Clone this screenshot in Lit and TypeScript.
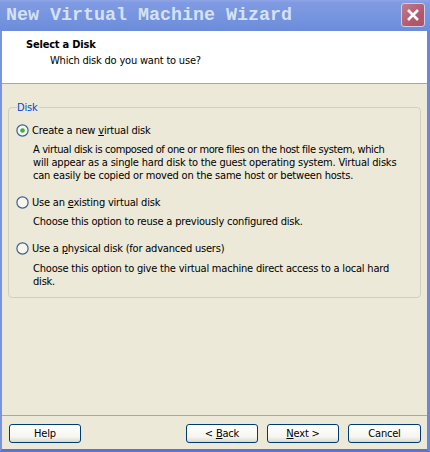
import { LitElement, html, css, svg } from "lit";
import { customElement } from "lit/decorators.js";

@customElement("app-root")
export class AppRoot extends LitElement {
  static styles = css`
    :host { display: block; width: 430px; height: 452px; overflow: hidden; font-family: "DejaVu Sans", Tahoma, sans-serif; font-stretch: condensed; font-size: 11px; letter-spacing: -0.2px; color: #000; }
    * { box-sizing: border-box; }
    .win { width: 430px; height: 452px; display: flex; flex-direction: column; background: #ece9d8; border-left: 2px solid #7a93df; border-right: 3px solid #6d86d8; border-bottom: 3px solid #5a74cf; }
    .titlebar { margin: 0 -3px 0 -2px; height: 31px; flex: none; display: flex; align-items: center; justify-content: space-between; padding: 0 5px 1px 6px; background: linear-gradient(180deg, #8ea4e6 0px, #7f9ae2 3px, #7896e0 14px, #6c8cdb 31px); }
    .title { font-family: "Liberation Mono", monospace; font-weight: 700; font-stretch: normal; letter-spacing: 0; font-size: 18.33px; color: #d5e2f6; white-space: pre; }
    .close { width: 24px; height: 24px; border: 1px solid #c9d0ea; border-radius: 3px; background: linear-gradient(135deg, #bf7c8c, #b2546a 70%); display: flex; align-items: center; justify-content: center; }
    .header { height: 53px; flex: none; background: #fff; border-bottom: 1px solid #aca899; padding: 6px 0 0 24px; }
    .h1 { font-weight: 700; line-height: 16px; }
    .h2 { line-height: 16px; padding-left: 24px; }
    .body { flex: 1; padding: 17px 7px 0 6px; }
    fieldset { margin: 0; padding: 9px 8px 0 8px; height: 197px; width: 413px; border: 1px solid #d0d0bf; border-radius: 4px; }
    legend { color: #0046d5; padding: 0 2px 0 0; margin-left: 0; line-height: 13px; }
    .opt { display: flex; align-items: center; gap: 3px; height: 14px; margin-left: -1px; }
    .radio { width: 13px; height: 13px; flex: none; }
    .desc { margin: 6px 0 0 16px; line-height: 13px; white-space: nowrap; }
    .tight { letter-spacing: -0.38px; }
    .o2 { margin-top: 13px; }
    .o3 { margin-top: 13px; }
    .d3 { margin-top: 7px; }
    u { text-underline-offset: 1px; }
    .footer { height: 34px; flex: none; border-top: 1px solid #aca899; display: flex; align-items: flex-start; padding: 8px 6px 0 7px; gap: 9px; }
    .btn { width: 72px; height: 19px; border: 1px solid #003c74; border-radius: 3px; background: linear-gradient(180deg, #fff 0%, #f6f5ef 70%, #dcd8ca 100%); font: inherit; font-stretch: condensed; letter-spacing: inherit; padding: 0; color: #000; }
    .spacer { flex: 1; }
    .last { width: 73px; }
  `;

  private radio(on: boolean) {
    return html`<svg class="radio" viewBox="0 0 13 13"><circle cx="6.5" cy="6.5" r="5.6" fill="#f6f5f0" stroke="#3f6288" stroke-width="1.2"/>${on ? svg`<circle cx="6.5" cy="6.5" r="2.3" fill="#3fae4a"/>` : ""}</svg>`;
  }

  render() {
    return html`<div class="win">
      <div class="titlebar">
        <span class="title">New Virtual Machine Wizard</span>
        <span class="close"><svg width="16" height="16" viewBox="0 0 16 16"><path d="M3 3 L13 13 M13 3 L3 13" stroke="#fff" stroke-width="2.6" fill="none"/></svg></span>
      </div>
      <div class="header">
        <div class="h1">Select a Disk</div>
        <div class="h2">Which disk do you want to use?</div>
      </div>
      <div class="body">
        <fieldset>
          <legend>Disk</legend>
          <div class="opt">${this.radio(true)}<span>Create a new <u>v</u>irtual disk</span></div>
          <div class="desc"><span class="tight">A virtual disk is composed of one or more files on the host file system, which</span><br>will appear as a single hard disk to the guest operating system. Virtual disks<br>can easily be copied or moved on the same host or between hosts.</div>
          <div class="opt o2">${this.radio(false)}<span>Use an <u>e</u>xisting virtual disk</span></div>
          <div class="desc">Choose this option to reuse a previously configured disk.</div>
          <div class="opt o3">${this.radio(false)}<span>Use a <u>p</u>hysical disk (for advanced users)</span></div>
          <div class="desc d3">Choose this option to give the virtual machine direct access to a local hard<br>disk.</div>
        </fieldset>
      </div>
      <div class="footer">
        <button class="btn">Help</button>
        <span class="spacer"></span>
        <button class="btn">&lt; <u>B</u>ack</button>
        <button class="btn"><u>N</u>ext &gt;</button>
        <button class="btn last">Cancel</button>
      </div>
    </div>`;
  }
}
